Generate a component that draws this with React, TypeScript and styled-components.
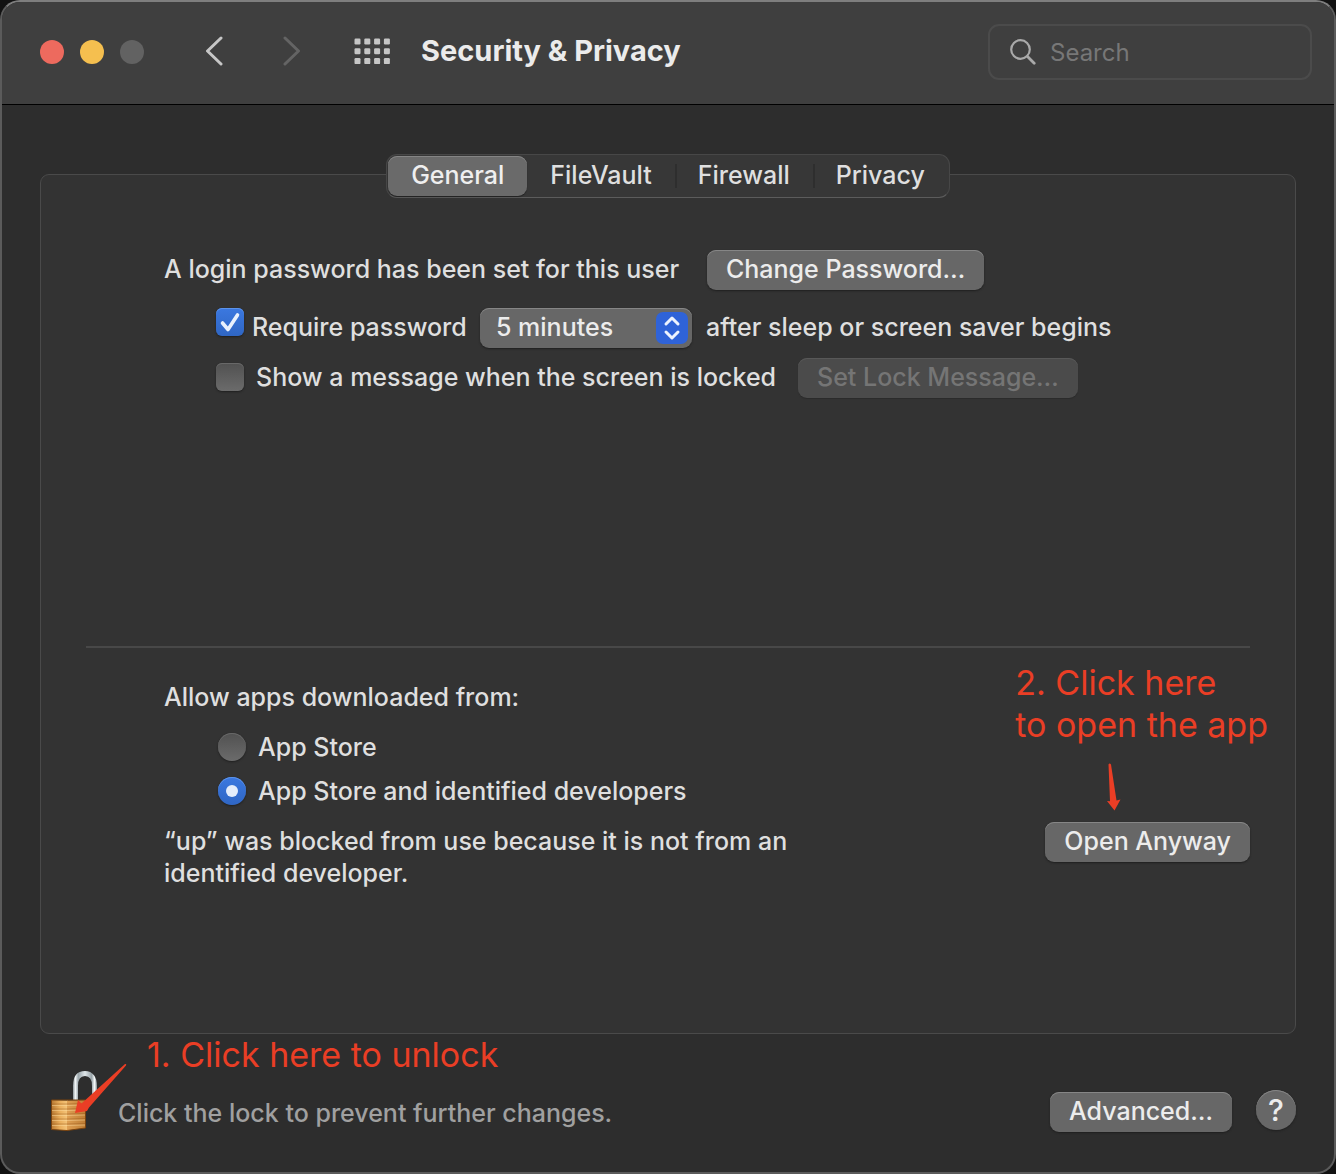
import React, { useState } from "react";
import styled, { createGlobalStyle, css } from "styled-components";

const GlobalStyle = createGlobalStyle`
  *, *::before, *::after { box-sizing: border-box; }
  body {
    margin: 0;
    background: #121212;
    font-family: Inter, "Liberation Sans", sans-serif;
    font-size: 25px;
    font-weight: 500;
    line-height: 32px;
    color: #dfdfdf;
  }
  button, input, select { font: inherit; color: inherit; margin: 0; }
`;

const Window = styled.div`
  min-height: 100vh;
  display: flex;
  flex-direction: column;
  background: #2d2d2d;
  border: 2px solid #5b5b5b;
  border-top-color: #7e7e7e;
  border-radius: 20px;
  overflow: hidden;
`;

const Toolbar = styled.header`
  display: flex;
  align-items: center;
  height: 103px;
  padding: 0 22px 2px 38px;
  background: #3f3f3f;
  border-bottom: 1px solid #000;
`;

const Lights = styled.div`
  display: flex;
  gap: 16px;
  margin-right: 56px;
`;

const Light = styled.button<{ $color: string }>`
  width: 24px;
  height: 24px;
  padding: 0;
  border: 0;
  border-radius: 50%;
  background: ${(p) => p.$color};
`;

const IconButton = styled.button<{ $dim?: boolean }>`
  display: flex;
  padding: 0;
  border: 0;
  background: none;
  color: ${(p) => (p.$dim ? "#646464" : "#c6c6c6")};
`;

const Nav = styled.nav`
  display: flex;
  align-items: center;
  gap: 50px;
  margin-right: 48px;
`;

const Title = styled.h1`
  flex: 1;
  margin: 0 0 0 30px;
  padding-bottom: 2px;
  font-size: 29px;
  line-height: 36px;
  font-weight: 700;
  color: #ebebeb;
`;

const SearchBox = styled.label`
  display: flex;
  align-items: center;
  gap: 14px;
  width: 324px;
  height: 56px;
  padding: 0 20px;
  border: 2px solid #4b4b4b;
  border-radius: 11px;
  color: #a9a9a9;
`;

const SearchInput = styled.input`
  flex: 1;
  min-width: 0;
  padding: 2px 0 0;
  border: 0;
  outline: 0;
  background: none;
  font-size: 24px;
  font-weight: 400;
  &::placeholder { color: #777; opacity: 1; }
`;

const Body = styled.main`
  flex: 1;
  display: flex;
  flex-direction: column;
  padding: 49px 38px 0;
`;

const Tabs = styled.div`
  position: relative;
  z-index: 1;
  align-self: center;
  display: flex;
  height: 44px;
  margin-bottom: -24px;
  padding: 1px;
  background: #373737;
  border: 1px solid #474747;
  border-bottom-color: #5c5c5c;
  border-radius: 11px;
`;

const Tab = styled.button<{ $active: boolean }>`
  position: relative;
  height: 40px;
  padding: 0 23px 2px;
  border: 0;
  border-radius: 9px;
  background: none;
  white-space: nowrap;
  & + &:not(:nth-child(2))::before {
    content: "";
    position: absolute;
    left: 0;
    top: 8px;
    width: 2px;
    height: 24px;
    background: #2e2e2e;
  }
  ${(p) =>
    p.$active &&
    css`
      background: #6a6a6a;
      color: #efefef;
      box-shadow: inset 0 1px #858585, 0 1px 1px #222;
    `}
`;

const Panel = styled.section`
  flex: 1;
  display: flex;
  flex-direction: column;
  padding: 75px 45px 40px;
  background: #333;
  border: 1px solid #4a4a4a;
  border-radius: 9px;
`;

const Passwords = styled.div`
  display: flex;
  flex-direction: column;
  min-height: 396px;
  padding-left: 78px;
`;

const Row = styled.div<{ $indent?: boolean; $space?: number }>`
  display: flex;
  height: 40px;
  margin-bottom: ${(p) => p.$space ?? 0}px;
  padding-left: ${(p) => (p.$indent ? 52 : 0)}px;
  white-space: nowrap;
`;

const Push = styled.button`
  height: 40px;
  padding: 0 19px 2px;
  border: 0;
  border-radius: 9px;
  background: #676767;
  color: #ececec;
  white-space: nowrap;
  box-shadow: inset 0 1px #868686, 0 1px 2px #1f1f1f;
  &:disabled {
    background: #4b4b4b;
    color: #757575;
    box-shadow: inset 0 1px #585858, 0 1px 1px #2b2b2b;
  }
`;

const RowText = styled.div<{ $width?: number }>`
  display: flex;
  align-items: center;
  width: ${(p) => (p.$width ? `${p.$width}px` : "auto")};
  padding-bottom: 2px;
`;

const Choice = styled.label<{ $gap: number }>`
  display: flex;
  align-items: center;
  align-self: stretch;
  gap: ${(p) => p.$gap}px;
`;

const Mark = styled.input`
  appearance: none;
  flex: none;
  display: grid;
  place-items: center;
  width: 28px;
  height: 28px;
  background: linear-gradient(#515151, #6b6b6b);
  box-shadow: inset 0 1px #686868, 0 1px 2px #1f1f1f;
  &:checked {
    background: linear-gradient(#3b78e0, #2f66c4);
    box-shadow: inset 0 1px #5c93ea, 0 1px 2px #1f1f1f;
  }
`;

const Check = styled(Mark).attrs({ type: "checkbox" })`
  border-radius: 6px;
`;

const CheckHolder = styled.span`
  position: relative;
  display: flex;
  align-self: flex-start;
  svg { position: absolute; left: 0; top: 0; pointer-events: none; }
`;

const Radio = styled(Mark).attrs({ type: "radio" })`
  border-radius: 50%;
  &:checked::before {
    content: "";
    width: 12px;
    height: 12px;
    border-radius: 50%;
    background: #e4edfb;
  }
`;

const SelectWrap = styled.span`
  position: relative;
  display: flex;
  width: 212px;
  margin-right: 14px;
  svg { position: absolute; right: 4px; top: 4px; pointer-events: none; }
`;

const Select = styled.select`
  appearance: none;
  width: 100%;
  height: 40px;
  padding: 0 40px 2px 16px;
  border: 0;
  border-radius: 9px;
  background: #676767;
  color: #ececec;
  box-shadow: inset 0 1px #868686, 0 1px 2px #1f1f1f;
`;

const Divider = styled.hr`
  width: 100%;
  height: 2px;
  margin: 0;
  border: 0;
  background: #484848;
`;

const Downloads = styled.div`
  position: relative;
  padding: 33px 0 0 78px;
`;

const Sources = styled.fieldset`
  display: flex;
  flex-direction: column;
  gap: 12px;
  min-width: 0;
  margin: 0 0 15px;
  padding: 0 0 0 54px;
  border: 0;
`;

const Legend = styled.legend`
  margin: 0 0 18px -54px;
  padding: 0;
`;

const Blocked = styled.div`
  display: flex;
  align-items: flex-start;
  justify-content: space-between;
`;

const Message = styled.p`
  max-width: 660px;
  margin: 3px 0 0;
`;

const Note = styled.p`
  position: absolute;
  margin: 0;
  font-size: 34px;
  font-weight: 400;
  line-height: 42px;
  color: #ea3e25;
  white-space: nowrap;
`;

const OpenNote = styled(Note)`
  top: 14px;
  right: -18px;
  svg { position: absolute; left: 90px; top: 100px; }
`;

const UnlockNote = styled(Note)`
  left: 107px;
  top: 0;
`;

const LockArrow = styled.svg`
  position: absolute;
  left: 34px;
  top: 28px;
  pointer-events: none;
`;

const Footer = styled.footer`
  position: relative;
  display: flex;
  align-items: flex-end;
  height: 138px;
  padding: 0 0 40px 8px;
`;

const FooterText = styled.span`
  flex: 1;
  margin-left: 20px;
  line-height: 38px;
  color: #a0a0a0;
`;

const Help = styled.button`
  width: 40px;
  height: 40px;
  margin: 0 0 2px 24px;
  padding: 0;
  border: 0;
  border-radius: 50%;
  background: #676767;
  color: #ececec;
  font-size: 30px;
  box-shadow: inset 0 1px #868686, 0 1px 2px #1f1f1f;
`;

const Chevron = ({ flip }: { flip?: boolean }) => (
  <svg width="28" height="32" viewBox="0 0 28 32" fill="none" stroke="currentColor" strokeWidth="3" strokeLinecap="round" strokeLinejoin="round">
    <path d={flip ? "M7 2 20.500 15 7 28" : "M21 2 7.500 15 21 28"} />
  </svg>
);

const GridIcon = () => (
  <svg width="37" height="28" viewBox="0 0 37 28" fill="currentColor">
    {[0, 1, 2].map((r) =>
      [0, 1, 2, 3].map((c) => <rect key={`${r}${c}`} x={0.5 + c * 9.8} y={0.5 + r * 9.8} width="6" height="6" rx="1.2" />)
    )}
  </svg>
);

const Padlock = () => (
  <svg width="50" height="62" viewBox="0 0 50 62">
    <defs>
      <linearGradient id="shackle" gradientUnits="userSpaceOnUse" x1="25" y1="0" x2="49" y2="0">
        <stop offset="0" stopColor="#8e979b" />
        <stop offset=".1" stopColor="#f4f8f9" />
        <stop offset=".22" stopColor="#9aa5aa" />
        <stop offset=".5" stopColor="#dfe6e9" />
        <stop offset=".78" stopColor="#98a3a8" />
        <stop offset=".9" stopColor="#f7fafb" />
        <stop offset="1" stopColor="#838d92" />
      </linearGradient>
      <linearGradient id="front" x1="0" x2="1">
        <stop offset="0" stopColor="#b87933" />
        <stop offset=".5" stopColor="#e9ad5b" />
        <stop offset="1" stopColor="#f5c67c" />
      </linearGradient>
      <linearGradient id="side" x1="0" x2="1">
        <stop offset="0" stopColor="#dfa053" />
        <stop offset="1" stopColor="#bd7c33" />
      </linearGradient>
    </defs>
    <path d="M27.500 30V16C27.500 7.500 31 3.500 37 3.500S46.500 8 46.500 16V27" fill="none" stroke="url(#shackle)" strokeWidth="5" />
    <path d="M3.500 30 20 30.500V60.500L3.500 59.500Z" fill="url(#front)" />
    <path d="M19 30.500 37.500 30V58L19 60.500Z" fill="url(#side)" />
    {[34, 39, 44, 49, 54].map((y) => (
      <g key={y} strokeWidth="1" fill="none">
        <path d={`M3.500 ${y}H19L37.500 ${y - 0.5}`} stroke="#99591c" opacity=".45" />
        <path d={`M3.500 ${y + 1.5}H19L37.500 ${y + 1}`} stroke="#ffe1a4" opacity=".45" />
      </g>
    ))}
    <path d="M3.500 30H37.500V58L19 60.500 3.500 59.500Z" fill="none" stroke="#79430f" strokeWidth="1" />
  </svg>
);

const tabs = ["General", "FileVault", "Firewall", "Privacy"];

export default function App() {
  const [tab, setTab] = useState("General");
  const [required, setRequired] = useState(true);
  const [source, setSource] = useState("identified");

  return (
    <>
      <GlobalStyle />
      <Window>
        <Toolbar>
          <Lights>
            <Light $color="#ed6a5e" aria-label="Close" />
            <Light $color="#f5bf4f" aria-label="Minimize" />
            <Light $color="#626262" aria-label="Zoom" />
          </Lights>
          <Nav>
            <IconButton aria-label="Back"><Chevron /></IconButton>
            <IconButton aria-label="Forward" $dim><Chevron flip /></IconButton>
          </Nav>
          <IconButton aria-label="Show all"><GridIcon /></IconButton>
          <Title>Security &amp; Privacy</Title>
          <SearchBox>
            <svg width="26" height="26" viewBox="0 0 26 26" fill="none" stroke="currentColor" strokeLinecap="round">
              <circle cx="10.500" cy="10.500" r="9.300" strokeWidth="2.200" />
              <path d="m17.500 17.500 6.700 6.700" strokeWidth="2.800" />
            </svg>
            <SearchInput type="text" placeholder="Search" aria-label="Search" />
          </SearchBox>
        </Toolbar>

        <Body>
          <Tabs role="tablist">
            {tabs.map((t) => (
              <Tab key={t} role="tab" aria-selected={t === tab} $active={t === tab} onClick={() => setTab(t)}>{t}</Tab>
            ))}
          </Tabs>

          <Panel>
            <Passwords>
              <Row $space={18}>
                <RowText $width={543}>A login password has been set for this user</RowText>
                <Push>Change Password…</Push>
              </Row>
              <Row $indent $space={10}>
                <RowText $width={264}>
                  <Choice $gap={8}>
                    <CheckHolder>
                      <Check checked={required} onChange={(e) => setRequired(e.target.checked)} />
                      {required && (
                        <svg width="28" height="28" viewBox="0 0 28 28" fill="none" stroke="#e9f1fd" strokeWidth="3.600" strokeLinecap="round" strokeLinejoin="round">
                          <path d="M6.500 15 12 21.500 21.500 7" />
                        </svg>
                      )}
                    </CheckHolder>
                    Require password
                  </Choice>
                </RowText>
                <SelectWrap>
                  <Select aria-label="Password delay" defaultValue="5 minutes">
                    <option>immediately</option>
                    <option>5 minutes</option>
                    <option>15 minutes</option>
                  </Select>
                  <svg width="32" height="32" viewBox="0 0 32 32" fill="none">
                    <rect width="32" height="32" rx="7" fill="#2f63d8" />
                    <path d="m10 12 6-6 6 6M10 20l6 6 6-6" stroke="#edf3fe" strokeWidth="3" strokeLinecap="round" strokeLinejoin="round" />
                  </svg>
                </SelectWrap>
                <RowText>after sleep or screen saver begins</RowText>
              </Row>
              <Row $indent>
                <RowText $width={582}>
                  <Choice $gap={12}>
                    <Check />
                    Show a message when the screen is locked
                  </Choice>
                </RowText>
                <Push disabled>Set Lock Message…</Push>
              </Row>
            </Passwords>

            <Divider />

            <Downloads>
              <Sources>
                <Legend>Allow apps downloaded from:</Legend>
                <Choice $gap={12}>
                  <Radio name="source" checked={source === "store"} onChange={() => setSource("store")} />
                  App Store
                </Choice>
                <Choice $gap={12}>
                  <Radio name="source" checked={source === "identified"} onChange={() => setSource("identified")} />
                  App Store and identified developers
                </Choice>
              </Sources>
              <Blocked>
                <Message>“up” was blocked from use because it is not from an identified developer.</Message>
                <Push>Open Anyway</Push>
              </Blocked>
              <OpenNote>
                2. Click here<br />to open the app
                <svg width="16" height="50" viewBox="0 0 16 50" fill="#ea3e25">
                  <path d="M3.500 2.500Q4.500 .5 6 2.500L11.500 38.500 15.500 37.500 9.500 48.500 2 39 5 39.200Z" />
                </svg>
              </OpenNote>
            </Downloads>
          </Panel>

          <Footer>
            <IconButton aria-label="Lock"><Padlock /></IconButton>
            <FooterText>Click the lock to prevent further changes.</FooterText>
            <Push>Advanced…</Push>
            <Help aria-label="Help">?</Help>
            <UnlockNote>1. Click here to unlock</UnlockNote>
            <LockArrow width="54" height="54" viewBox="0 0 54 54" fill="#ea3e25">
              <path d="M1 51 4 38 7.500 41.500 51 2Q53 1.500 52 3.500L15 45.500 13 49Z" />
            </LockArrow>
          </Footer>
        </Body>
      </Window>
    </>
  );
}
